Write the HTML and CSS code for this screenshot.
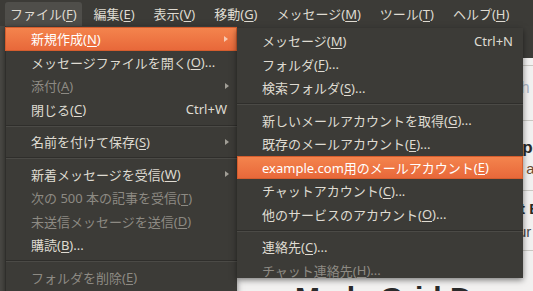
FILE: index.html
```html
<!DOCTYPE html>
<html lang="ja">
<head>
  <meta charset="UTF-8">
  <title>メニュー</title>
  <link rel="stylesheet" href="styles.css">
</head>
<body>
<div class="screen">

  <div class="menubar">
    <span class="top active">ファイル(<u>F</u>)</span>
    <span class="top">編集(<u>E</u>)</span>
    <span class="top">表示(<u>V</u>)</span>
    <span class="top">移動(<u>G</u>)</span>
    <span class="top">メッセージ(<u>M</u>)</span>
    <span class="top">ツール(<u>T</u>)</span>
    <span class="top">ヘルプ(<u>H</u>)</span>
  </div>

  <!-- the page behind the open menus -->
  <div class="app">
    <div class="side"></div>
    <div class="main">
      <div class="toolbar"></div>
      <div class="row search">Search 7</div>
      <div class="row post">
        <div class="title">Lorem ipsum po</div>
        <div class="meta">by lorem au</div>
      </div>
      <div class="row post small">
        <div class="title">Dolor sit B</div>
        <div class="meta">consectetur ti</div>
      </div>
      <h1 class="heading">Made Grid Demo</h1>
    </div>
  </div>

  <div class="menu file">
    <div class="item hover">新規作成(<u>N</u>)<span class="arrow"></span></div>
    <div class="item">メッセージファイルを開く(<u>O</u>)...</div>
    <div class="item off">添付(<u>A</u>)<span class="arrow"></span></div>
    <div class="item">閉じる(<u>C</u>)<span class="accel">Ctrl+W</span></div>
    <div class="sep"></div>
    <div class="item">名前を付けて保存(<u>S</u>)<span class="arrow"></span></div>
    <div class="sep"></div>
    <div class="item">新着メッセージを受信(<u>W</u>)<span class="arrow"></span></div>
    <div class="item off">次の 500 本の記事を受信(<u>T</u>)</div>
    <div class="item off">未送信メッセージを送信(<u>D</u>)</div>
    <div class="item">購読(<u>B</u>)...</div>
    <div class="sep"></div>
    <div class="item off">フォルダを削除(<u>E</u>)</div>
  </div>

  <div class="menu sub">
    <div class="item">メッセージ(<u>M</u>)<span class="accel">Ctrl+N</span></div>
    <div class="item">フォルダ(<u>F</u>)...</div>
    <div class="item">検索フォルダ(<u>S</u>)...</div>
    <div class="sep"></div>
    <div class="item">新しいメールアカウントを取得(<u>G</u>)...</div>
    <div class="item">既存のメールアカウント(<u>E</u>)...</div>
    <div class="item hover">example.com用のメールアカウント(<u>E</u>)</div>
    <div class="item">チャットアカウント(<u>C</u>)...</div>
    <div class="item">他のサービスのアカウント(<u>O</u>)...</div>
    <div class="sep"></div>
    <div class="item">連絡先(<u>C</u>)...</div>
    <div class="item off">チャット連絡先(<u>H</u>)...</div>
  </div>

</div>
</body>
</html>
```

FILE: styles.css
```css
body {
  margin: 0;
  background: #3c3b37;
}
.screen {
  position: relative;
  width: 533px;
  height: 291px;
  overflow: hidden;
  font-family: "Noto Sans", "Noto Sans CJK JP", sans-serif;
  font-size: 13px;
  color: #dfdbd2;
}
u { text-decoration-thickness: 1px; text-underline-offset: 2px; }

/* menubar */
.menubar {
  display: flex;
  align-items: flex-end;
  height: 26px;
  padding-left: 5px;
  background: #3c3b37;
  box-sizing: border-box;
}
.top {
  height: 24px;
  line-height: 25px;
  padding: 0 5px;
  margin-right: 9px;
  white-space: nowrap;
}
.top:first-child { margin-right: 7px; }
.top.active {
  background: #4f4e4a;
  border-radius: 3px 3px 0 0;
}

/* page behind */
.app {
  display: flex;
  height: 265px;
}
.side {
  width: 5px;
  background: #4a4945;
}
.main {
  flex: 1;
  background: #f2f1f0;
  overflow: hidden;
}
.toolbar {
  height: 32px;
  background: #3d3c38;
}
.row {
  text-align: right;
  margin-right: -10px;
  border-bottom: 1px solid #c9c7c2;
  font-family: "Liberation Sans", sans-serif;
  white-space: nowrap;
}
.row.search {
  border-top: 1px solid #c9c7c2;
  margin-top: 7px;
  height: 56px;
  padding-top: 14px;
  box-sizing: border-box;
  color: #a9b4c4;
  font-size: 16px;
  line-height: 16px;
}
.post {
  height: 70px;
  padding-top: 17px;
  box-sizing: border-box;
}
.post.small {
  height: 60px;
  padding-top: 8px;
}
.title {
  font-size: 17px;
  font-weight: bold;
  color: #2a2a2a;
  line-height: 20px;
}
.small .title { font-size: 15px; margin-right: 3px; }
.meta {
  font-size: 15px;
  color: #6b4a30;
  line-height: 22px;
}
.small .meta { color: #4a4a4a; margin-top: 2px; }
.heading {
  margin: 29px 0 0 290px;
  font-family: "Liberation Sans", sans-serif;
  font-size: 30px;
  line-height: 36px;
  color: #2a2a2a;
  white-space: nowrap;
}

/* menus */
.menu {
  position: absolute;
  background: #3c3b37;
  box-shadow: 0 2px 6px rgba(0, 0, 0, 0.5);
}
.menu.file {
  left: 5px;
  top: 26px;
  width: 232px;
  height: 290px;
  padding-top: 1px;
  border-left: 1px solid #2f2e2b;
  box-sizing: border-box;
}
.menu.sub {
  left: 237px;
  top: 28px;
  width: 286px;
  height: 250px;
  padding-top: 1px;
  box-sizing: border-box;
}
.item {
  display: flex;
  align-items: center;
  height: 23.5px;
  padding: 0 10px 0 25px;
  white-space: nowrap;
  box-sizing: border-box;
}
.item.off { color: #8d8a83; }
.item.hover {
  color: #ffffff;
  background: linear-gradient(#f4844d, #e8683a);
  border: 1px solid #d45d2e;
  padding-left: 24px;
}
.menu.file .item.hover { margin-left: -1px; padding-left: 25px; }
.accel { margin-left: auto; }
.arrow {
  margin-left: auto;
  margin-right: -2px;
  border-left: 4px solid #a19e96;
  border-top: 3px solid transparent;
  border-bottom: 3px solid transparent;
}
.hover .arrow { border-left-color: #f8c9b2; }
.sep {
  height: 0;
  margin: 3.5px 0;
  border-top: 1px solid #2f2e2b;
  border-bottom: 1px solid #4b4a46;
}
```
